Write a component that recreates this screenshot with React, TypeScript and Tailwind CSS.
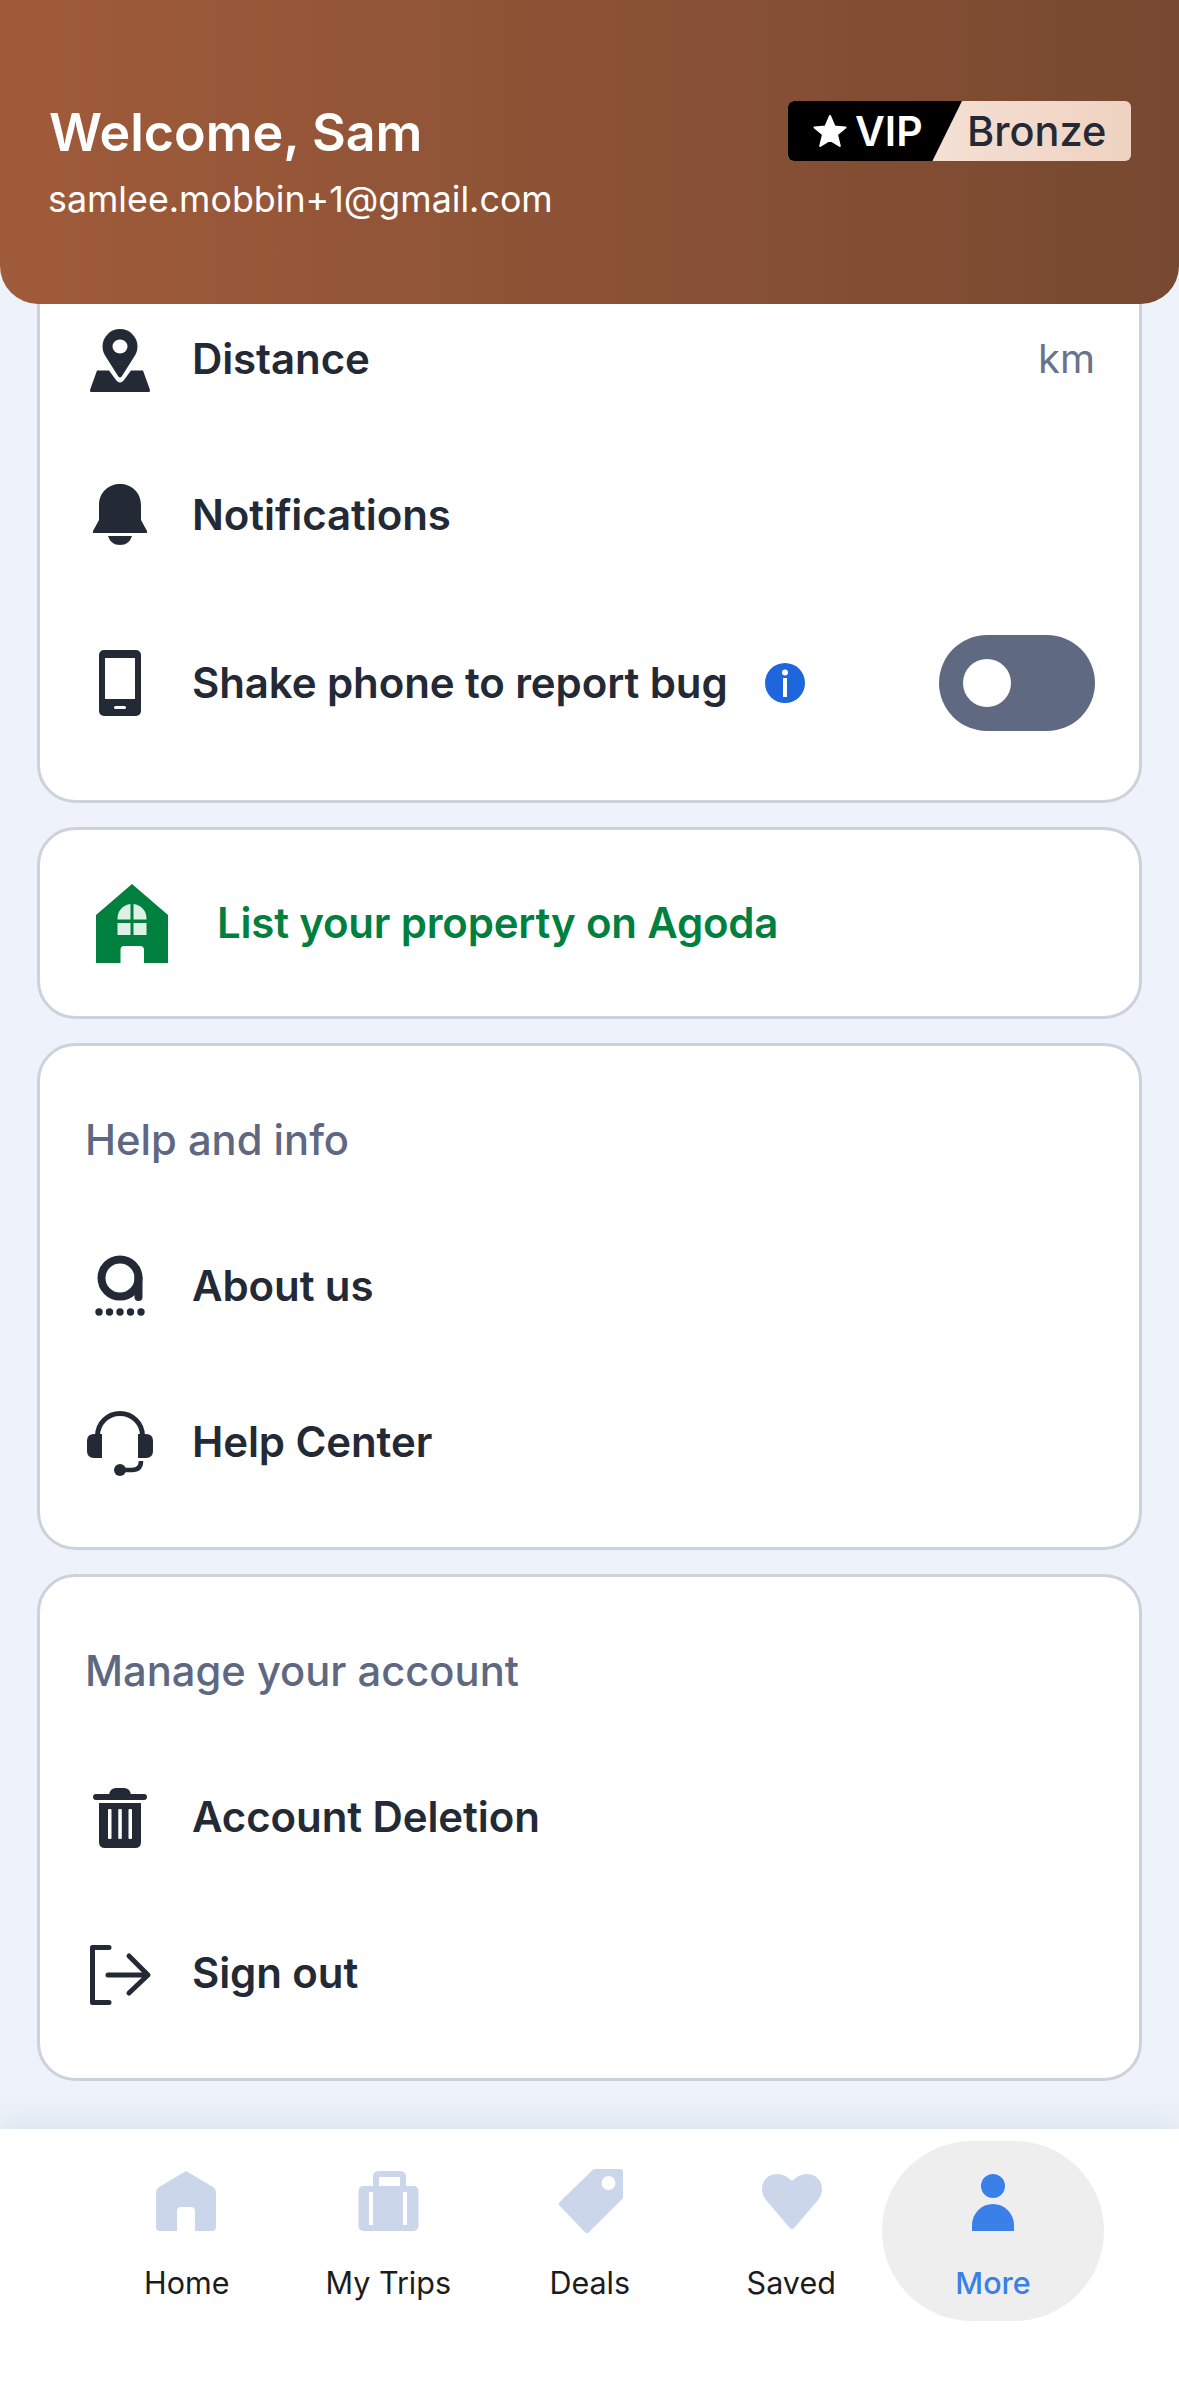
import React from 'react';

const ink = '#232A36';
const navGrey = '#CBD6EA';

const PinIcon = () => (
  <svg width="72" height="72" viewBox="0 0 72 72" fill={ink}>
    <path fillRule="evenodd" d="M37 6A17.5 17.5 0 0 1 54.5 23.5C54.5 28 53 31 51 34L39 53Q37 56 35 53L23 34C21 31 19.5 28 19.5 23.5A17.5 17.5 0 0 1 37 6ZM37 16.5A7.5 7 0 1 0 37 30.5A7.5 7 0 1 0 37 16.5Z" />
    <path d="M14 47.5H26L33 57Q37 62 41 57L48 47.5H60L67 67Q67.3 69 66 69H8Q6.7 69 7 67Z" />
  </svg>
);

const BellIcon = () => (
  <svg width="72" height="72" viewBox="0 0 72 72" fill={ink}>
    <path d="M37 5C48 5 58 13 58 26V41L64 52V54H10V52L16 41V26C16 13 26 5 37 5Z" />
    <path d="M25 57H49C47 63 43 66 37 66C31 66 27 63 25 57Z" />
  </svg>
);

const PhoneIcon = () => (
  <svg width="72" height="72" viewBox="0 0 72 72">
    <rect x="16" y="3" width="42" height="66" rx="5" fill={ink} />
    <rect x="22" y="11" width="30" height="41" fill="#fff" />
    <rect x="31" y="59" width="12" height="3" rx="1.5" fill="#fff" />
  </svg>
);

const InfoIcon = () => (
  <svg width="40" height="40" viewBox="0 0 40 40">
    <circle cx="20" cy="20" r="20" fill="#1E66DD" />
    <circle cx="20" cy="9.5" r="3" fill="#fff" />
    <rect x="18" y="15" width="4" height="19" fill="#fff" />
  </svg>
);

const HouseIcon = () => (
  <svg width="72" height="79" viewBox="0 0 72 79">
    <path d="M36 0L72 31V79H48V66Q48 62 44 62H28Q24.5 62 24.5 66V79H0V31Z" fill="#00803F" />
    <path d="M34.5 35.5H21.5V34A14.5 14.5 0 0 1 34.5 20ZM37.5 35.5H50.5V34A14.5 14.5 0 0 0 37.5 20ZM21.5 39H34.5V51H21.5ZM37.5 39H50.5V51H37.5Z" fill="#DDF1E6" />
  </svg>
);

const AgodaIcon = () => (
  <svg width="72" height="72" viewBox="0 0 72 72" fill="none">
    <circle cx="37" cy="28" r="18.5" stroke={ink} strokeWidth="8" />
    <path d="M55.5 28V47" stroke={ink} strokeWidth="8" strokeLinecap="round" />
    {[16, 26.5, 37, 47.5, 58].map((x) => (
      <circle key={x} cx={x} cy="62" r="3.7" fill={ink} />
    ))}
  </svg>
);

const HeadsetIcon = () => (
  <svg width="72" height="72" viewBox="0 0 72 72" fill="none">
    <path d="M14.5 30A22.5 22.5 0 0 1 59.5 30" stroke={ink} strokeWidth="5" />
    <path d="M19 28V52H11Q4 52 4 45V35Q4 28 11 28Z" fill={ink} />
    <path d="M55 28V52H63Q70 52 70 45V35Q70 28 63 28Z" fill={ink} />
    <circle cx="37" cy="64" r="6" fill={ink} />
    <path d="M37 64H49Q58 64 58 55" stroke={ink} strokeWidth="4.5" />
  </svg>
);

const TrashIcon = () => (
  <svg width="72" height="72" viewBox="0 0 72 72">
    <rect x="10" y="13" width="54" height="6" rx="3" fill={ink} />
    <path d="M26 14Q27 7 33 7H41Q47 7 48 14Z" fill={ink} />
    <path d="M16 22H58V61Q58 67 52 67H22Q16 67 16 61Z" fill={ink} />
    <rect x="25" y="28" width="3.5" height="30" rx="1" fill="#fff" />
    <rect x="35.3" y="28" width="3.5" height="30" rx="1" fill="#fff" />
    <rect x="45.5" y="28" width="3.5" height="30" rx="1" fill="#fff" />
  </svg>
);

const SignOutIcon = () => (
  <svg width="72" height="72" viewBox="0 0 72 72" fill="none" stroke={ink} strokeWidth="5" strokeLinecap="round" strokeLinejoin="round">
    <path d="M26 10.5H9.5V65.5H26" />
    <path d="M25 38H64M46 19L65 38L46 56" />
  </svg>
);

const HomeTab = () => (
  <svg width="72" height="72" viewBox="0 0 72 72" fill={navGrey}>
    <path d="M35 6L62 22Q65 24 65 27V62Q65 66 61 66H44V46Q44 42 40 42H30Q26 42 26 46V66H9Q5 66 5 62V27Q5 24 8 22Z" />
  </svg>
);

const TripsTab = () => (
  <svg width="72" height="72" viewBox="0 0 72 72">
    <path d="M24 22V12Q24 9 27 9H48Q51 9 51 12V22" fill="none" stroke={navGrey} strokeWidth="6" />
    <rect x="6.5" y="21" width="60" height="45" rx="5" fill={navGrey} />
    <rect x="17" y="27" width="4" height="33" fill="#fff" />
    <rect x="51" y="27" width="4" height="33" fill="#fff" />
  </svg>
);

const DealsTab = () => (
  <svg width="72" height="72" viewBox="0 0 72 72">
    <path d="M41 7H66V32L33 65L8 39Z" fill={navGrey} stroke={navGrey} strokeWidth="6" strokeLinejoin="round" />
    <circle cx="54.5" cy="18" r="7" fill="#fff" />
  </svg>
);

const SavedTab = () => (
  <svg width="72" height="72" viewBox="0 0 72 72" fill={navGrey}>
    <path d="M37 64C36 64 35 63 34 62L11 35C8 31 7 28 7 24C7 15 14 9 22 9C28 9 33 12 37 16C41 12 46 9 52 9C60 9 67 15 67 24C67 28 66 31 63 35L40 62C39 63 38 64 37 64Z" />
  </svg>
);

const MoreTab = () => (
  <svg width="72" height="72" viewBox="0 0 72 72" fill="#3B7FE8">
    <circle cx="36" cy="21" r="12" />
    <path d="M15 66V60A21 21 0 0 1 57 60V66Z" />
  </svg>
);

const Row = ({ icon, label }: { icon: React.ReactNode; label: string }) => (
  <div className="flex h-[156px] items-center gap-[37px] pl-[43px] pr-[44px]">
    <div className="h-[72px] w-[72px] shrink-0">{icon}</div>
    <span className="text-[42px] font-semibold leading-[56px] tracking-[-0.1px] text-[#232A36]">{label}</span>
  </div>
);

const Section = ({ title, children }: { title: string; children: React.ReactNode }) => (
  <section className="mt-[24px] h-[507px] rounded-[38px] border-[3px] border-[#CCD1DC] bg-white">
    <h2 className="pb-[38px] pl-[45px] pt-[64px] text-[41.7px] font-medium leading-[60px] text-[#5E6880]">{title}</h2>
    {children}
  </section>
);

const tabs = [
  { label: 'Home', icon: <HomeTab /> },
  { label: 'My Trips', icon: <TripsTab /> },
  { label: 'Deals', icon: <DealsTab /> },
  { label: 'Saved', icon: <SavedTab /> },
];

export default function App() {
  return (
    <div className="flex h-[2396px] w-[1179px] flex-col overflow-hidden bg-[#EEF3FB] font-['Inter',sans-serif]">
      <header className="relative z-10 flex h-[304px] shrink-0 items-start justify-between rounded-b-[38px] bg-gradient-to-r from-[#A05B3A] to-[#774930] pl-[48px] pr-[48px] pt-[101px]">
        <div>
          <h1 className="ml-[1px] mt-[2px] text-[52px] font-semibold leading-[60px] text-white">Welcome, Sam</h1>
          <p className="mt-[14px] text-[35.8px] leading-[44px] text-white">samlee.mobbin+1@gmail.com</p>
        </div>
        <div className="flex h-[60px] w-[343px] overflow-hidden rounded-[6px] bg-gradient-to-r from-[#F7EAE3] to-[#EFD2C1]">
          <div className="flex h-full w-[174px] shrink-0 items-center gap-[8px] bg-black pl-[25px] [clip-path:polygon(0_0,100%_0,83%_100%,0_100%)]">
            <svg width="34" height="34" viewBox="0 0 34 34" fill="#fff" stroke="#fff" strokeWidth="2" strokeLinejoin="round">
              <path d="M17 2L21.5 12.5L32.5 13.5L24 20.5L26.8 32L17 26L7.2 32L10 20.5L1.5 13.5L12.5 12.5Z" />
            </svg>
            <span className="text-[41px] font-semibold leading-[60px] text-white">VIP</span>
          </div>
          <span className="pl-[5px] text-[41.5px] font-medium leading-[60px] text-[#232A36]">Bronze</span>
        </div>
      </header>

      <main className="flex-1 px-[37px]">
        <section className="-mt-[60px] rounded-[38px] border-[3px] border-[#CCD1DC] bg-white pb-[27px] pt-[34px]">
          <div className="flex h-[156px] items-center gap-[37px] pl-[43px] pr-[44px]">
            <div className="h-[72px] w-[72px] shrink-0">
              <PinIcon />
            </div>
            <span className="text-[42px] font-semibold leading-[56px] tracking-[-0.1px] text-[#232A36]">Distance</span>
            <span className="ml-auto text-[40px] leading-[56px] text-[#68738C]">km</span>
          </div>
          <Row icon={<BellIcon />} label="Notifications" />
          <div className="flex h-[180px] items-center gap-[37px] pl-[43px] pr-[44px]">
            <div className="h-[72px] w-[72px] shrink-0">
              <PhoneIcon />
            </div>
            <span className="text-[42px] font-semibold leading-[56px] tracking-[-0.1px] text-[#232A36]">Shake phone to report bug</span>
            <InfoIcon />
            <div className="ml-auto flex h-[96px] w-[156px] items-center rounded-full bg-[#5F6A82] pl-[24px]">
              <div className="h-[48px] w-[48px] rounded-full bg-white" />
            </div>
          </div>
        </section>

        <section className="mt-[24px] flex h-[192px] items-center gap-[49px] rounded-[38px] border-[3px] border-[#CCD1DC] bg-white pl-[56px]">
          <HouseIcon />
          <span className="text-[42px] font-semibold leading-[56px] tracking-[-0.2px] text-[#00803F]">List your property on Agoda</span>
        </section>

        <Section title="Help and info">
          <Row icon={<AgodaIcon />} label="About us" />
          <Row icon={<HeadsetIcon />} label="Help Center" />
        </Section>

        <Section title="Manage your account">
          <Row icon={<TrashIcon />} label="Account Deletion" />
          <Row icon={<SignOutIcon />} label="Sign out" />
        </Section>
      </main>

      <nav className="relative flex h-[267px] shrink-0 items-start bg-white pl-[86px] pt-[12px] shadow-[0_-10px_28px_rgba(30,40,70,0.08)]">
        {tabs.map((tab) => (
          <div key={tab.label} className="flex w-[201.5px] flex-col items-center pt-[24px]">
            <div className="h-[72px] w-[72px]">{tab.icon}</div>
            <span className="mt-[26px] text-[30.5px] leading-[40px] text-[#1C1C1E]">{tab.label}</span>
          </div>
        ))}
        <div className="-ml-[10px] flex h-[180px] w-[222px] flex-col items-center rounded-[90px] bg-[#EEEEEE] pt-[24px]">
          <div className="h-[72px] w-[72px]">
            <MoreTab />
          </div>
          <span className="mt-[26px] text-[30.5px] font-medium leading-[40px] text-[#3B7FE8]">More</span>
        </div>
      </nav>
    </div>
  );
}
